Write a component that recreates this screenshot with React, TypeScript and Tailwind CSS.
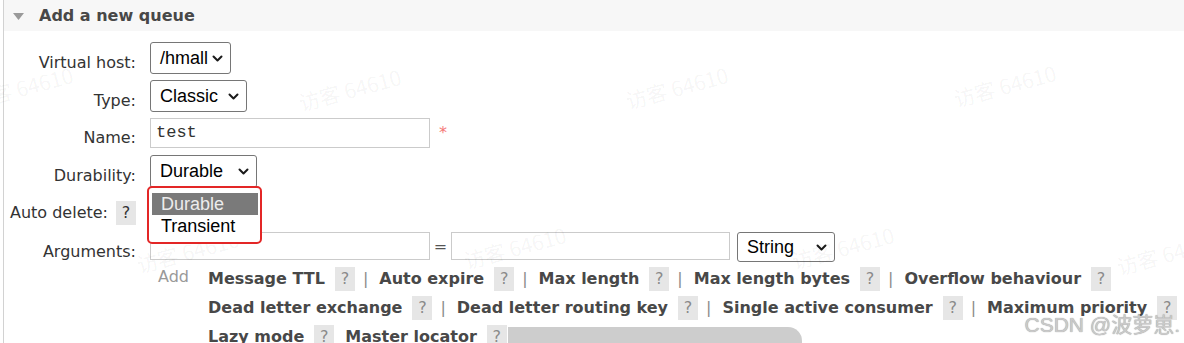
import React from 'react';

const Chevron = () => (
  <svg width="11" height="7" viewBox="0 0 11 7" className="shrink-0">
    <path d="M1.5 1.5l4 4 4-4" fill="none" stroke="#1a1a1a" strokeWidth="2" strokeLinecap="round" strokeLinejoin="round" />
  </svg>
);

const FakeSelect = ({ value, size }: { value: string; size: string }) => (
  <div
    className={`flex items-center justify-between border border-[#767676] rounded-[3px] bg-white pl-[9px] pr-[7px] text-[18px] text-black font-['Liberation_Sans',Arial,sans-serif] ${size}`}
  >
    <span>{value}</span>
    <Chevron />
  </div>
);

const Help = ({ className = '' }: { className?: string }) => (
  <span
    className={`inline-flex w-[20px] h-[24px] items-center justify-center bg-[#e6e6e6] text-[#8a8a8a] font-normal ${className}`}
  >
    ?
  </span>
);

const Sep = () => <span className="ml-[8px] mr-[11px] font-normal text-[#8a8a8a]">|</span>;

const Item = ({ label, last }: { label: string; last?: boolean }) => (
  <>
    <span className="font-bold text-[#484848]">{label}</span>
    <Help className="ml-[10px]" />
    {!last && <Sep />}
  </>
);

// faint "visitor" watermarks tiled over the page
const marks = [
  'left-[22px] top-[88px]',
  'left-[350px] top-[90px]',
  'left-[677px] top-[88px]',
  'left-[1005px] top-[86px]',
  'left-[188px] top-[252px]',
  'left-[515px] top-[248px]',
  'left-[843px] top-[248px]',
  'left-[1168px] top-[254px]',
];

export default function App() {
  return (
    <div className="relative w-[1184px] h-[343px] overflow-hidden bg-white font-['DejaVu_Sans',Verdana,sans-serif] text-[16px] text-[#333]">
      <div className="ml-[3px] h-full border-l border-[#d2d2d2]">
        {/* Header */}
        <div className="flex h-[31px] items-center bg-[#f7f7f7] pl-[9px] pt-[1px]">
          <svg width="11" height="7" viewBox="0 0 11 7">
            <path d="M0 0h11L5.5 7z" fill="#9a9a9a" />
          </svg>
          <span className="ml-[15px] font-bold text-[#484848]">Add a new queue</span>
        </div>

        {/* Form */}
        <div className="pt-[11px]">
          <div className="flex h-[32px] items-center">
            <label className="w-[132px] pt-[9px] text-right">Virtual host:</label>
            <div className="ml-[14px]">
              <FakeSelect value="/hmall" size="w-[81px] h-[32px]" />
            </div>
          </div>

          <div className="mt-[6px] flex h-[32px] items-center">
            <label className="w-[132px] pt-[9px] text-right">Type:</label>
            <div className="ml-[14px]">
              <FakeSelect value="Classic" size="w-[97px] h-[32px]" />
            </div>
          </div>

          <div className="mt-[6px] flex h-[30px] items-center">
            <label className="w-[132px] pt-[9px] text-right">Name:</label>
            <div className="ml-[14px] flex h-[30px] w-[280px] items-center border border-[#cbcbcb] bg-white pl-[5px] font-['Liberation_Mono',monospace] text-[17px] text-[#333]">
              test
            </div>
            <span className="ml-[9px] self-start pt-[3px] text-[#f57878]">*</span>
          </div>

          <div className="mt-[7px] flex h-[33px] items-center">
            <label className="w-[132px] pt-[9px] text-right">Durability:</label>
            <div className="ml-[14px]">
              <FakeSelect value="Durable" size="w-[107px] h-[33px]" />
            </div>
          </div>

          <div className="mt-[13px] flex h-[24px] items-center">
            <div className="flex w-[132px] items-center justify-end">
              <label>Auto delete:</label>
              <Help className="ml-[8px] w-[19px] text-[#333]" />
            </div>
          </div>

          <div className="mt-[7px] flex h-[30px] items-start">
            <label className="w-[132px] pt-[8px] text-right">Arguments:</label>
            <div className="ml-[14px] h-[28px] w-[280px] border border-[#cbcbcb] bg-white" />
            <span className="w-[21px] pt-[3px] text-center text-[#555]">=</span>
            <div className="h-[28px] w-[279px] border border-[#cbcbcb] bg-white" />
            <div className="ml-[7px]">
              <FakeSelect value="String" size="w-[98px] h-[30px]" />
            </div>
          </div>

          {/* Add links */}
          <div className="mt-[2px] flex pl-[154px]">
            <span className="w-[50px] pt-[1px] leading-[24px] text-[#999]">Add</span>
            <div className="flex flex-col whitespace-nowrap">
              <div className="flex h-[29px] items-center">
                <Item label="Message TTL" />
                <Item label="Auto expire" />
                <Item label="Max length" />
                <Item label="Max length bytes" />
                <Item label="Overflow behaviour" last />
              </div>
              <div className="flex h-[29px] items-center">
                <Item label="Dead letter exchange" />
                <Item label="Dead letter routing key" />
                <Item label="Single active consumer" />
                <Item label="Maximum priority" last />
              </div>
              <div className="flex h-[29px] items-center">
                <span className="font-bold text-[#484848]">Lazy mode</span>
                <Help className="ml-[10px] mr-[11px]" />
                <span className="font-bold text-[#484848]">Master locator</span>
                <Help className="ml-[10px] bg-[#d9d9d9]" />
              </div>
            </div>
          </div>
        </div>
      </div>

      {/* gray bar peeking in at the bottom */}
      <div className="absolute left-[508px] top-[327px] h-[30px] w-[294px] rounded-tr-[14px] bg-[#cdcdcd]" />

      {/* watermarks */}
      {marks.map((pos) => (
        <span
          key={pos}
          className={`pointer-events-none absolute -translate-x-1/2 -translate-y-1/2 -rotate-[15deg] whitespace-nowrap font-['Noto_Sans_CJK_SC',sans-serif] text-[21px] text-[#000]/[0.05] ${pos}`}
        >
          访客 64610
        </span>
      ))}

      {/* open dropdown list, highlighted in red */}
      <div className="absolute left-[147px] top-[186px] h-[58px] w-[115px] rounded-[5px] border-2 border-[#e32626] bg-white pl-[3px] pr-[2px] pt-[5px] font-['Liberation_Sans',Arial,sans-serif] text-[18px] leading-[22px]">
        <div className="h-[22px] bg-[#7a7a7a] pl-[9px] text-[#ececec]">Durable</div>
        <div className="h-[22px] pl-[9px] text-black">Transient</div>
      </div>

      {/* site watermark */}
      <span className="absolute right-[4px] top-[309px] whitespace-nowrap font-['Liberation_Sans','Noto_Sans_CJK_SC',sans-serif] text-[21px] text-[#cacaca] [text-shadow:0_0_1px_#8a8a8a]">
        CSDN @波萝崽.
      </span>
    </div>
  );
}
